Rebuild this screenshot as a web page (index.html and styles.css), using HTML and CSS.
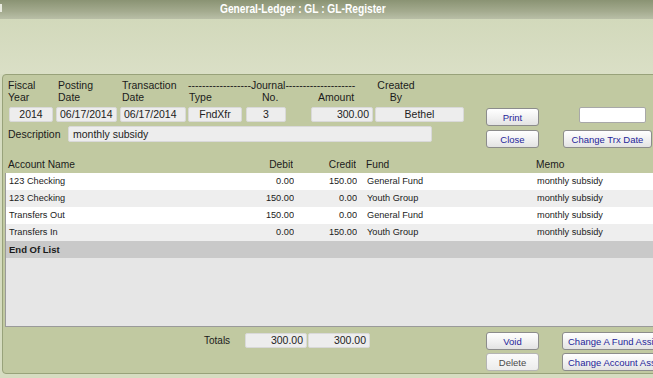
FILE: index.html
```html
<!DOCTYPE html>
<html>
<head>
<meta charset="utf-8">
<link rel="stylesheet" href="styles.css">
</head>
<body>
<div class="titlebar"><span class="tb-icon"></span><span class="tb-title">General-Ledger : GL : GL-Register</span></div>
<div class="spacer"></div>
<div class="panel">
  <div class="top">
    <div class="fields">
      <div class="lbl c1 r1">Fiscal</div>
      <div class="lbl c2 r1">Posting</div>
      <div class="lbl c3 r1">Transaction</div>
      <div class="lbl journal r1">------------------Journal--------------------</div>
      <div class="lbl c7 r1 ctr-by">Created</div>
      <div class="lbl c1 r2">Year</div>
      <div class="lbl c2 r2">Date</div>
      <div class="lbl c3 r2">Date</div>
      <div class="lbl c4 r2 pl1">Type</div>
      <div class="lbl c5 r2 ctr-no">No.</div>
      <div class="lbl c6 r2 pl-amt">Amount</div>
      <div class="lbl c7 r2 ctr-by">By</div>
      <div class="inp c1 r3 w44 center">2014</div>
      <div class="inp c2 r3 w61">06/17/2014</div>
      <div class="inp c3 r3 w66">06/17/2014</div>
      <div class="inp c4 r3 w54 center">FndXfr</div>
      <div class="inp c5 r3 w40 center">3</div>
      <div class="inp c6 r3 w62 right">300.00</div>
      <div class="inp c7 r3 w89 center">Bethel</div>
      <div class="desc-row">
        <span class="desc-lbl">Description</span>
        <div class="inp desc">monthly subsidy</div>
      </div>
    </div>
    <div class="btncol">
      <button class="btn">Print</button>
      <button class="btn">Close</button>
    </div>
    <div class="rightcol">
      <div class="white-inp"></div>
      <button class="btn wide">Change Trx Date</button>
    </div>
  </div>

  <div class="thead grid">
    <div class="cell name">Account Name</div>
    <div class="cell num">Debit</div>
    <div class="cell num">Credit</div>
    <div class="cell fund">Fund</div>
    <div class="cell memo">Memo</div>
  </div>
  <div class="tbox">
    <div class="row grid">
      <div class="cell name">123 Checking</div><div class="cell num">0.00</div><div class="cell num">150.00</div><div class="cell fund">General Fund</div><div class="cell memo">monthly subsidy</div>
    </div>
    <div class="row grid alt">
      <div class="cell name">123 Checking</div><div class="cell num">150.00</div><div class="cell num">0.00</div><div class="cell fund">Youth Group</div><div class="cell memo">monthly subsidy</div>
    </div>
    <div class="row grid">
      <div class="cell name">Transfers Out</div><div class="cell num">150.00</div><div class="cell num">0.00</div><div class="cell fund">General Fund</div><div class="cell memo">monthly subsidy</div>
    </div>
    <div class="row grid alt">
      <div class="cell name">Transfers In</div><div class="cell num">0.00</div><div class="cell num">150.00</div><div class="cell fund">Youth Group</div><div class="cell memo">monthly subsidy</div>
    </div>
    <div class="row end">End Of List</div>
    <div class="empty"></div>
  </div>

  <div class="bottom">
    <div class="totals">
      <span class="tot-lbl">Totals</span>
      <div class="inp w62 right">300.00</div>
      <div class="inp w62 right">300.00</div>
    </div>
    <div class="btncol2">
      <button class="btn">Void</button>
      <button class="btn disabled">Delete</button>
    </div>
    <div class="rightcol2">
      <button class="btn wide2">Change A Fund Assignment</button>
      <button class="btn wide2">Change Account Assignment</button>
    </div>
  </div>
</div>
</body>
</html>
```

FILE: styles.css
```css
html, body {
  margin: 0;
  padding: 0;
}
body {
  width: 653px;
  height: 378px;
  overflow: hidden;
  background: #d6dcc1;
  font-family: "Liberation Sans", Arial, sans-serif;
  color: #1b1b1b;
}
.titlebar {
  height: 19px;
  display: flex;
  align-items: flex-start;
  background: linear-gradient(#8a9373, #a4ab8f 60%, #b9bfa7);
}
.tb-icon {
  width: 2px;
  height: 8px;
  margin-top: 4px;
  background: #e8eadf;
}
.tb-title {
  display: inline-block;
  margin-left: 218px;
  color: #fff;
  font-family: "Liberation Sans", Arial, sans-serif;
  font-weight: bold;
  font-size: 12.5px;
  line-height: 19px;
  white-space: nowrap;
  transform: scaleX(0.815);
  transform-origin: left center;
}
.spacer {
  height: 55px;
  background: linear-gradient(#d2d9bb, #dadfc6);
}
.panel {
  margin-left: 2px;
  width: 700px;
  height: 300px;
  box-sizing: border-box;
  background: #c1c9a1;
  border: 1px solid #98a27a;
  border-radius: 4px;
  padding-top: 4px;
}
.top {
  display: flex;
  height: 69px;
}
.fields {
  display: grid;
  margin-left: 6px;
  grid-template-columns: 47px 64px 68px 58px 65px 64px 89px;
  grid-template-rows: 12px 12px 15px 16px;
  row-gap: 0;
  align-content: start;
}
.lbl {
  font-size: 10.5px;
  line-height: 12px;
  white-space: nowrap;
  margin-left: -1px;
}
.r1 { grid-row: 1; }
.r2 { grid-row: 2; }
.r3 { grid-row: 3; margin-top: 4px; }
.c1 { grid-column: 1; }
.c2 { grid-column: 2; }
.c3 { grid-column: 3; }
.c4 { grid-column: 4; }
.c5 { grid-column: 5; }
.c6 { grid-column: 6; }
.c7 { grid-column: 7; }
.lbl.c2 { margin-left: 2px; }
.lbl.c3 { margin-left: 2px; }
.journal {
  grid-column: 4 / 7;
  margin-left: 0;
}
.pl1 { margin-left: 1px; }
.ctr-no { margin-left: 16px; }
.pl-amt { margin-left: 7px; }
.ctr-by { width: 42px; text-align: center; margin-left: 0; }
.inp {
  box-sizing: border-box;
  height: 15px;
  background: #ededed;
  border: 1px solid #d9d9d9;
  border-radius: 2px;
  font-size: 10.5px;
  line-height: 13px;
  padding: 0 3px;
  white-space: nowrap;
  color: #222;
}
.center { text-align: center; }
.right { text-align: right; }
.w44 { width: 44px; }
.w61 { width: 61px; }
.w66 { width: 66px; }
.w54 { width: 54px; }
.w40 { width: 40px; }
.w62 { width: 62px; }
.w89 { width: 89px; }
.desc-row {
  grid-column: 1 / 8;
  grid-row: 4;
  display: flex;
  align-items: center;
  margin-top: 8px;
  height: 16px;
}
.desc-lbl {
  font-size: 10.5px;
  margin-left: -1px;
  width: 60px;
}
.inp.desc {
  width: 364px;
  height: 16px;
  line-height: 14px;
  padding-left: 4px;
}
.btncol {
  display: flex;
  flex-direction: column;
  gap: 4px;
  margin-left: 22px;
  padding-top: 29px;
}
.btn {
  box-sizing: border-box;
  width: 53px;
  height: 18px;
  padding: 0;
  border: 1px solid #8c8c8c;
  border-radius: 3px;
  background: linear-gradient(#ffffff, #f2f2f2 50%, #e3e3e3);
  color: #25259a;
  font-family: "Liberation Sans", Arial, sans-serif;
  font-size: 9.5px;
  white-space: nowrap;
  overflow: hidden;
}
.btn.disabled {
  color: #4a4a4a;
  border-color: #b4b4b4;
  background: linear-gradient(#fbfbfb, #ececec);
}
.rightcol {
  display: flex;
  flex-direction: column;
  margin-left: 24px;
  padding-top: 28px;
}
.white-inp {
  box-sizing: border-box;
  width: 67px;
  height: 16px;
  margin-left: 16px;
  background: #fff;
  border: 1px solid #a8a8a8;
  border-radius: 2px;
}
.btn.wide {
  width: 89px;
  margin-top: 7px;
}
.grid {
  display: grid;
  grid-template-columns: 230px 58px 63px 170px 1fr;
}
.thead {
  margin-top: 9px;
  height: 16px;
  padding-left: 2px;
  font-size: 10.2px;
  line-height: 16px;
}
.cell {
  white-space: nowrap;
  overflow: hidden;
}
.name { padding-left: 3px; }
.num { text-align: right; }
.fund, .memo { padding-left: 10px; }
.tbox {
  margin-left: 2px;
  border-left: 1px solid #9a9a9a;
  border-bottom: 1px solid #9a9a9a;
  background: #e6e6e6;
}
.row {
  height: 17px;
  font-size: 9.2px;
  line-height: 17px;
  background: #fff;
}
.row.alt { background: #eeeeee; }
.row.end {
  background: #c9c9c9;
  font-weight: bold;
  font-size: 9.5px;
  padding-left: 3px;
}
.empty { height: 68px; }
.bottom {
  display: flex;
  padding-top: 5px;
}
.totals {
  display: flex;
  align-items: flex-start;
  padding-left: 201px;
}
.tot-lbl {
  font-size: 10px;
  width: 41px;
  margin-top: 3px;
}
.totals .inp {
  font-size: 10.5px;
  margin-top: 1px;
  margin-right: 1px;
}
.btncol2 {
  display: flex;
  flex-direction: column;
  gap: 3px;
  margin-left: 115px;
}
.rightcol2 {
  display: flex;
  flex-direction: column;
  gap: 3px;
  margin-left: 23px;
}
.btn.wide2 {
  width: 110px;
  text-align: left;
  padding-left: 5px;
}
```
